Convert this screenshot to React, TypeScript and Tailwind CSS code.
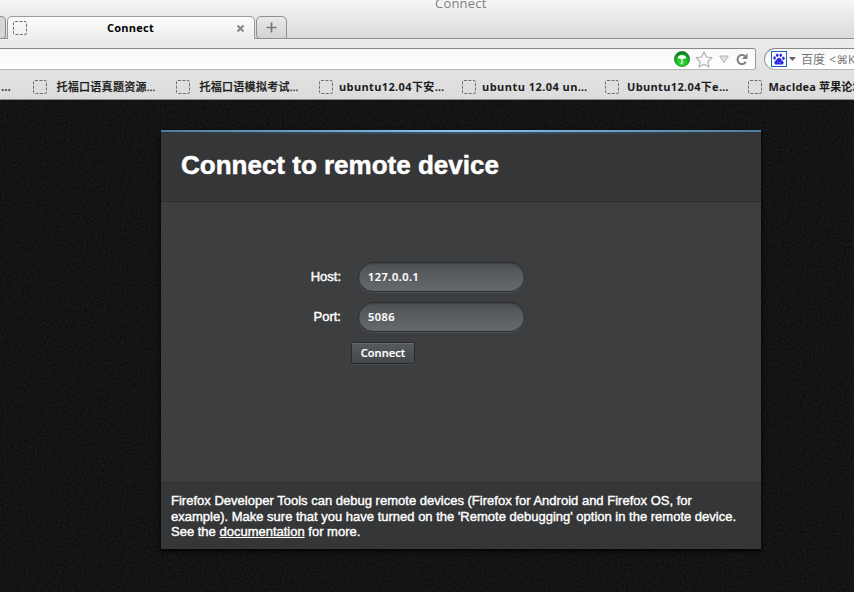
import React from 'react';

const UI = "font-['Open_Sans','Noto_Sans_CJK_SC',sans-serif]";

function Placeholder() {
  return (
    <svg width="14" height="14" viewBox="0 0 14 14" className="shrink-0">
      <rect x="0.5" y="0.5" width="13" height="13" rx="1.5" fill="none" stroke="#6e6e6e" strokeWidth="1" strokeDasharray="3 1.4" />
    </svg>
  );
}

const bookmarks = [
  { text: '托福口语真题资源…', pad: 'pl-[9.5px]', type: 'text-[11px] font-medium tracking-[0.28px] [-webkit-text-stroke:0.25px_#1c1c1c]' },
  { text: '托福口语模拟考试…', pad: 'pl-[9.5px]', type: 'text-[11px] font-medium tracking-[0.28px] [-webkit-text-stroke:0.25px_#1c1c1c]' },
  { text: 'ubuntu12.04下安…', pad: 'pl-[6px]', type: 'text-[11px] font-bold tracking-[0.36px]' },
  { text: 'ubuntu 12.04 un…', pad: 'pl-[6px]', type: 'text-[11px] font-bold tracking-[0.45px]' },
  { text: 'Ubuntu12.04下e…', pad: 'pl-[8px]', type: 'text-[11px] font-bold tracking-[0.34px]' },
  { text: 'MacIdea 苹果论坛', pad: 'pl-[6.5px]', type: 'text-[11px] font-bold tracking-[0.16px]' },
];

function TabStrip() {
  return (
    <div className="relative h-[39px] border-b border-[#8f8f8f] bg-linear-to-b from-[#f6f6f6] to-[#dadada]">
      <div className="absolute left-[435px] top-[-6px] text-[13px] leading-[18px] tracking-[0.2px] text-[#808080]">Connect</div>
      <div className="flex h-[39px] items-end">
        <div className="mr-[1px] h-[23px] w-[6px] rounded-tr-[5px] rounded-br-[4px] border border-l-0 border-[#8f8f8f] bg-[#d6d6d6]" />
        <div className="flex h-[23px] w-[248px] items-center rounded-t-[5px] border border-b-0 border-[#9b9b9b] bg-linear-to-b from-[#fcfcfc] to-[#ededed] pl-[5px] pr-[9px]">
          <Placeholder />
          <div className="flex-1 pr-[2px] pb-[1px] text-center text-[11px] leading-[15px] font-bold tracking-[0.25px] text-black">Connect</div>
          <svg width="9" height="9" viewBox="0 0 9 9">
            <path d="M1.5 1.5 7.5 7.5M7.5 1.5 1.5 7.5" stroke="#858585" strokeWidth="2" />
          </svg>
        </div>
        <div className="ml-[1px] flex h-[23px] w-[31px] items-center justify-center rounded-t-[5px] rounded-bl-[4px] border border-[#8f8f8f] bg-linear-to-b from-[#e9e9e9] to-[#d3d3d3]">
          <svg width="11" height="11" viewBox="0 0 11 11" className="mr-[1px]">
            <path d="M5.5 0.5V10.5M0.5 5.5H10.5" stroke="#777" strokeWidth="1.7" />
          </svg>
        </div>
      </div>
    </div>
  );
}

function NavBar() {
  return (
    <div className="flex h-[31px] bg-linear-to-b from-[#ededed] to-[#e2e2e2] pt-[9px]">
      <div className="flex h-[22px] w-[756px] shrink-0 items-center justify-end rounded-r-[3px] border border-l-0 border-t-[#898989] border-r-[#999] border-b-[#b5b5b5] bg-linear-to-b from-[#f8f8f8] to-white pr-[7px]">
        <svg width="16" height="16" viewBox="0 0 16 16">
          <defs>
            <radialGradient id="green" cx="0.5" cy="0.75" r="0.7">
              <stop offset="0" stopColor="#42e83c" />
              <stop offset="0.65" stopColor="#0faf20" />
              <stop offset="1" stopColor="#087a18" />
            </radialGradient>
          </defs>
          <circle cx="8" cy="8" r="7.6" fill="url(#green)" stroke="#087d1b" strokeWidth="0.7" />
          <path d="M3.6 8C3.6 5.4 5.5 4 8 4S12.4 5.4 12.4 8C11.4 7.4 10.4 7.4 9.5 7.9H6.5C5.6 7.4 4.6 7.4 3.6 8Z" fill="white" />
          <path d="M8 7V12Q8 12.7 6.8 12.4" stroke="white" strokeWidth="1.1" fill="none" />
        </svg>
        <svg width="18" height="17" viewBox="0 0 18 17" className="ml-[5px]">
          <path d="M9 1 11.4 6 17 6.7 12.9 10.5 14 16 9 13.3 4 16 5.1 10.5 1 6.7 6.6 6Z" fill="#fcfcfc" stroke="#aaa" strokeWidth="1.1" strokeLinejoin="round" />
        </svg>
        <svg width="10" height="9" viewBox="0 0 10 9" className="ml-[6px]">
          <path d="M0.7 1H9.3L5 7.8Z" fill="#e2e2e2" stroke="#b0b0b0" strokeWidth="0.9" />
        </svg>
        <svg width="12" height="13" viewBox="0 0 12 13" className="ml-[7px]">
          <path d="M8.8 3A4.5 4.5 0 1 0 9.9 8.8" fill="none" stroke="#808080" strokeWidth="2" />
          <path d="M11.5 0.3V6H6Z" fill="#808080" />
        </svg>
      </div>
      <div className="ml-[8px] flex h-[22px] min-w-0 flex-1 items-center rounded-l-full border border-r-0 border-t-[#898989] border-l-[#999] border-b-[#b5b5b5] bg-linear-to-b from-[#f8f8f8] to-white pl-[6px]">
        <svg width="16" height="16" viewBox="0 0 16 16" className="shrink-0">
          <rect x="0.5" y="0.5" width="15" height="15" fill="white" stroke="#1465b8" />
          <g fill="#2b2be0">
            <ellipse cx="3.6" cy="7" rx="1.3" ry="1.7" transform="rotate(-10 3.6 7)" />
            <ellipse cx="6.3" cy="4.3" rx="1.3" ry="1.8" />
            <ellipse cx="9.8" cy="4.3" rx="1.3" ry="1.8" />
            <ellipse cx="12.4" cy="7.2" rx="1.3" ry="1.7" />
            <path d="M8 6.8C9.9 6.8 10.2 8.8 11.7 10 13.3 11.3 12.8 13.6 10.6 13.6 9.6 13.6 9 13.4 8 13.4S6.4 13.6 5.4 13.6C3.2 13.6 2.7 11.3 4.3 10 5.8 8.8 6.1 6.8 8 6.8Z" />
          </g>
          <path d="M6.4 10.4V12.2M8.6 10.4V12.2H9.9V10.4" stroke="#8f8fff" strokeWidth="0.4" fill="none" />
        </svg>
        <svg width="7" height="4" viewBox="0 0 7 4" className="ml-[2px] shrink-0">
          <path d="M0 0H7L3.5 4Z" fill="#666" />
        </svg>
        <div className="ml-[5px] pt-[1px] text-[12px] leading-[16px] whitespace-nowrap text-[#777]">
          百度 <span className="ml-[1px] tracking-[0.6px]">&lt;</span><span className="font-['DejaVu_Sans',sans-serif] text-[11.5px]">⌘</span>K
        </div>
      </div>
    </div>
  );
}

function BookmarksBar() {
  return (
    <div className="flex h-[30px] items-center overflow-hidden border-b border-[#8b8b8b] bg-linear-to-b from-[#e2e2e2] to-[#dcdcdc] pt-[4px] text-[#1c1c1c]">
      <div className="w-[33px] shrink-0 pl-[1px] text-[12px] leading-[16px] font-semibold tracking-[0.3px]">…</div>
      {bookmarks.map((b) => (
        <div key={b.text} className="flex w-[143px] shrink-0 items-center whitespace-nowrap">
          <Placeholder />
          <div className={`${b.pad} ${b.type} leading-[16px]`}>{b.text}</div>
        </div>
      ))}
    </div>
  );
}

function Field({ label, value }: { label: string; value: string }) {
  return (
    <div className="flex h-[30px] items-center">
      <div className="w-[180px] text-right text-[13px] leading-[16px] text-white [-webkit-text-stroke:0.45px_white]">{label}</div>
      <div className={`ml-[17px] flex h-[30px] w-[167px] items-center rounded-full border border-[#2b2d2f] bg-linear-to-b from-[#4e5154] to-[#666a6f] pl-[9px] text-[11px] font-semibold tracking-[0.5px] text-white [-webkit-text-stroke:0.2px_white] shadow-[0_1px_0_#505356,inset_0_1px_2px_rgba(0,0,0,0.2)] ${UI}`}>
        {value}
      </div>
    </div>
  );
}

export default function App() {
  return (
    <div className="flex h-[592px] w-[854px] flex-col overflow-hidden bg-[#141414]">
      <div className={UI}>
        <TabStrip />
        <NavBar />
        <BookmarksBar />
      </div>
      <main className="relative flex-1 pt-[30px] pl-[161px] font-['Liberation_Sans',Arial,sans-serif]">
        <svg className="absolute inset-0 h-full w-full">
          <filter id="grain" x="0" y="0" width="1" height="1" colorInterpolationFilters="sRGB">
            <feTurbulence type="fractalNoise" baseFrequency="0.45" numOctaves="2" seed="4" />
            <feColorMatrix values="0.08 0 0 0 0.038  0.08 0 0 0 0.038  0.08 0 0 0 0.038  0 0 0 0 1" />
          </filter>
          <rect width="100%" height="100%" filter="url(#grain)" />
        </svg>
        <section className="relative flex h-[419px] w-[600px] flex-col bg-[#3d3e40] shadow-[0_2px_5px_rgba(0,0,0,0.9)]">
          <div className="h-[2px] bg-linear-to-r from-[#4c7d9c] via-[#86c5f4] to-[#4c7d9c]" />
          <div className="h-[2px] bg-linear-to-r from-[#343537] via-[#3f5365] to-[#343537]" />
          <header className="flex h-[68px] items-center border-b border-[#2b2c2d] bg-[#353637] pb-[6px] pl-[20px]">
            <h1 className="text-[26px] leading-[32px] font-bold text-white [-webkit-text-stroke:0.5px_white]">Connect to remote device</h1>
          </header>
          <div className="flex flex-1 flex-col gap-[10px] pt-[60px]">
            <Field label="Host:" value="127.0.0.1" />
            <Field label="Port:" value="5086" />
            <div className={`ml-[190px] flex h-[22px] w-[64px] items-center justify-center rounded-[2px] border border-[#28292b] bg-linear-to-b from-[#56595d] to-[#45484b] text-[11px] font-semibold tracking-[0.1px] text-white [-webkit-text-stroke:0.2px_white] shadow-[inset_0_1px_0_#686c70,0_1px_0_#4a4c4e] ${UI}`}>Connect</div>
          </div>
          <footer className="h-[67px] border-t border-[#2d2e2f] bg-[#353637] pt-[10px] pl-[10px] text-[13px] leading-[15.5px] whitespace-nowrap text-white [-webkit-text-stroke:0.4px_white]">
            <p className="tracking-[0.01px]">Firefox Developer Tools can debug remote devices (Firefox for Android and Firefox OS, for</p>
            <p>example). Make sure that you have turned on the 'Remote debugging' option in the remote device.</p>
            <p>See the <span className="underline underline-offset-1">documentation</span> for more.</p>
          </footer>
        </section>
      </main>
    </div>
  );
}
